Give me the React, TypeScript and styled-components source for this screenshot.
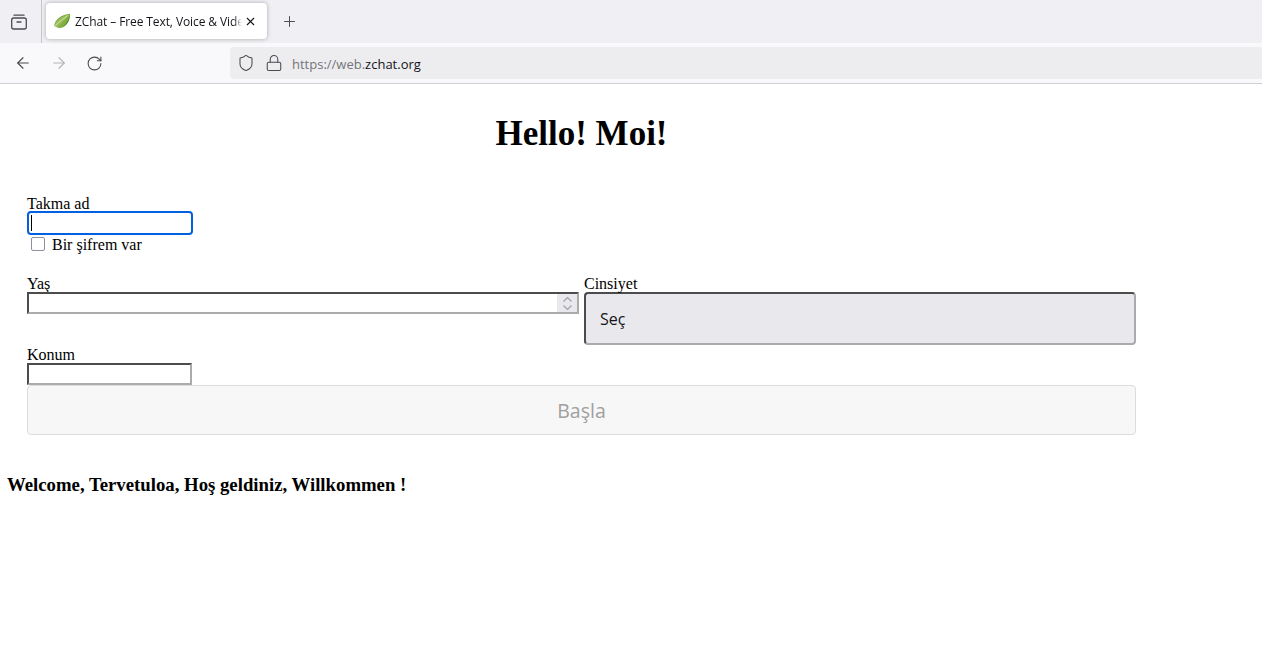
import styled, { createGlobalStyle } from 'styled-components';
import { ArrowLeft, ArrowRight, RotateCw, Shield, Lock, Plus, X } from 'lucide-react';

const GlobalStyle = createGlobalStyle`
  html, body {
    margin: 0;
    padding: 0;
    background: #fff;
    overflow: hidden;
    font-family: "Liberation Serif", "Times New Roman", serif;
    font-size: 16px;
    color: #000;
  }
`;

const UI_FONT = `"Open Sans", "Noto Sans", sans-serif`;

const TabStrip = styled.div`
  height: 43px;
  background: #f0f0f4;
  display: flex;
  align-items: stretch;
`;

const ViewButton = styled.div`
  width: 42px;
  display: flex;
  align-items: center;
  justify-content: center;
  border-right: 1px solid #c6c6cc;
  color: #4a4a50;
  padding-right: 4px;
  box-sizing: border-box;
`;

const Tab = styled.div`
  width: 221px;
  height: 36px;
  margin: 3px 0 0 4px;
  background: #fff;
  border-radius: 4px;
  box-shadow: 0 0 4px rgba(0, 0, 0, 0.3);
  display: flex;
  align-items: center;
  padding: 0 10px 0 8px;
  box-sizing: border-box;
  gap: 5px;
  font-family: ${UI_FONT};
  font-size: 12px;
  letter-spacing: -0.1px;
  color: #15141a;
`;

const TabTitle = styled.span`
  flex: 1;
  min-width: 0;
  margin-right: -3px;
  white-space: nowrap;
  overflow: hidden;
  -webkit-mask-image: linear-gradient(to right, #000 calc(100% - 8px), transparent);
  mask-image: linear-gradient(to right, #000 calc(100% - 8px), transparent);
`;

const NewTab = styled.div`
  width: 44px;
  display: flex;
  align-items: center;
  justify-content: center;
  color: #4a4a50;
`;

const NavBar = styled.div`
  height: 40px;
  background: #f9f9fb;
  border-bottom: 1px solid #cfcfd8;
  display: flex;
  align-items: center;
  padding-left: 14px;
`;

const NavIcons = styled.div`
  width: 216px;
  display: flex;
  align-items: center;
  gap: 18px;
`;

const NavIcon = styled.span<{ $off?: boolean }>`
  display: flex;
  color: ${p => (p.$off ? '#b4b4b8' : '#4a4a50')};
`;

const UrlBar = styled.div`
  flex: 1;
  height: 32px;
  background: #ededf0;
  border-radius: 4px 0 0 4px;
  display: flex;
  align-items: center;
  padding-left: 7px;
  gap: 10px;
  color: #4a4a50;
  font-family: ${UI_FONT};
  font-size: 13px;
`;

const UrlText = styled.span`
  margin-left: -1px;
  padding-top: 1px;
  color: #74747a;
  b {
    font-weight: 400;
    color: #15141a;
  }
`;

const Page = styled.main`
  padding: 28px 0 0 7px;
`;

const Form = styled.form`
  width: 1109px;
  margin-left: 20px;
`;

const Title = styled.h1`
  margin: 0 0 39px;
  font-size: 35px;
  line-height: 43px;
  font-weight: 700;
  text-align: center;
`;

const FieldLabel = styled.label`
  display: block;
  line-height: 18px;
  height: 17px;
`;

const NickLabel = styled(FieldLabel)`
  line-height: 20px;
`;

const BoxInput = styled.div<{ $wide?: boolean }>`
  position: relative;
  width: ${p => (p.$wide ? '100%' : '165px')};
  height: 22px;
  box-sizing: border-box;
  border: 2px solid;
  border-color: #4c4c4c #ababab #ababab #4c4c4c;
  background: #fff;
  display: flex;
  justify-content: flex-end;
`;

const FocusInput = styled.div`
  position: relative;
  width: 166px;
  height: 24px;
  box-sizing: border-box;
  border: 2px solid #0060df;
  border-radius: 4px;
  background: #fff;
`;

const Caret = styled.span`
  position: absolute;
  left: 2px;
  top: 2px;
  width: 1px;
  height: 16px;
  background: #000;
`;

const Spinner = styled.div`
  width: 20px;
  height: 100%;
  background: #e9e9ed;
  display: flex;
  flex-direction: column;
  align-items: center;
  justify-content: center;
  gap: 3px;
  color: #a4a4ac;
`;

const CheckRow = styled.div`
  display: flex;
  align-items: center;
  height: 20px;
  padding-left: 4px;
  gap: 7px;
`;

const CheckBox = styled.span`
  width: 14px;
  height: 14px;
  margin-top: -2px;
  box-sizing: border-box;
  border: 1px solid #8f8f9d;
  border-radius: 2px;
  background: #fff;
`;

const Columns = styled.div`
  display: grid;
  grid-template-columns: 552px 552px;
  gap: 5px;
  margin-top: 20px;
`;

const SelectBox = styled.div`
  height: 53px;
  box-sizing: border-box;
  border: 2px solid;
  border-color: #4c4c4c #ababab #ababab #4c4c4c;
  border-radius: 4px;
  background: #e9e9ed;
  display: flex;
  align-items: center;
  padding-left: 14px;
  font-family: ${UI_FONT};
  font-size: 16px;
  color: #15141a;
`;

const LocationField = styled.div`
  margin-top: 1px;
`;

const StartButton = styled.button`
  display: block;
  width: 100%;
  height: 50px;
  box-sizing: border-box;
  border: 1px solid #dcdcdc;
  border-radius: 4px;
  background: #f7f7f7;
  color: #a0a0a0;
  font-family: ${UI_FONT};
  font-size: 19.5px;
  padding: 1px 0 0;
`;

const Welcome = styled.h3`
  margin: 39px 0 0;
  font-size: 18.75px;
  line-height: 21px;
  font-weight: 700;
`;

export default function App() {
  return (
    <>
      <GlobalStyle />
      <TabStrip>
        <ViewButton>
          <svg width="18" height="18" viewBox="0 0 18 18" fill="none" stroke="currentColor" strokeWidth="1.3">
            <path d="M4 2.2h10" strokeLinecap="round" />
            <rect x="1.7" y="5" width="14.6" height="11" rx="2" />
            <path d="M7 9h4" strokeLinecap="round" />
          </svg>
        </ViewButton>
        <Tab>
          <svg width="16" height="16" viewBox="0 0 16 16">
            <path d="M0.2 12.5C1 7 6 2 16 0.800C16 6.500 13.500 12.500 8 14.500C5 15.500 2 14.500 0.200 12.500Z" fill="#7fb041" />
            <path d="M0.200 12.500C2.500 7.500 8 3.500 16 0.800C13 4.500 8 9 3.500 14.200C2.300 13.800 1 13.300 0.200 12.500Z" fill="#9ebd63" />
            <path d="M0.800 13C4 10 8 6.500 14 2.500" stroke="#d9e8a6" strokeWidth="0.8" fill="none" />
            <path d="M6 15C10.500 14 14.500 9 16 0.800C16 6.500 13.500 12.500 8 14.500C7.300 14.800 6.700 14.900 6 15Z" fill="#4f7d28" />
          </svg>
          <TabTitle>ZChat – Free Text, Voice &amp; Video Chat</TabTitle>
          <X size={13} strokeWidth={2} />
        </Tab>
        <NewTab>
          <Plus size={17} strokeWidth={1.4} />
        </NewTab>
      </TabStrip>
      <NavBar>
        <NavIcons>
          <NavIcon>
            <ArrowLeft size={18} strokeWidth={1.5} />
          </NavIcon>
          <NavIcon $off>
            <ArrowRight size={18} strokeWidth={1.5} />
          </NavIcon>
          <NavIcon>
            <RotateCw size={17} strokeWidth={1.5} />
          </NavIcon>
        </NavIcons>
        <UrlBar>
          <Shield size={18} strokeWidth={1.4} />
          <Lock size={18} strokeWidth={1.4} />
          <UrlText>
            https://web.<b>zchat.org</b>
          </UrlText>
        </UrlBar>
      </NavBar>
      <Page>
        <Form>
          <Title>Hello! Moi!</Title>
          <NickLabel>Takma ad</NickLabel>
          <FocusInput>
            <Caret />
          </FocusInput>
          <CheckRow>
            <CheckBox />
            <span>Bir şifrem var</span>
          </CheckRow>
          <Columns>
            <div>
              <FieldLabel>Yaş</FieldLabel>
              <BoxInput $wide>
                <Spinner>
                  <svg width="9" height="5" viewBox="0 0 9 5" fill="none" stroke="currentColor" strokeWidth="1.3">
                    <path d="M0.500 4.500l4-4 4 4" />
                  </svg>
                  <svg width="9" height="5" viewBox="0 0 9 5" fill="none" stroke="currentColor" strokeWidth="1.3">
                    <path d="M0.500 0.500l4 4 4-4" />
                  </svg>
                </Spinner>
              </BoxInput>
            </div>
            <div>
              <FieldLabel>Cinsiyet</FieldLabel>
              <SelectBox>Seç</SelectBox>
            </div>
          </Columns>
          <LocationField>
            <FieldLabel>Konum</FieldLabel>
            <BoxInput />
          </LocationField>
          <StartButton type="button">Başla</StartButton>
        </Form>
        <Welcome>Welcome, Tervetuloa, Hoş geldiniz, Willkommen !</Welcome>
      </Page>
    </>
  );
}
